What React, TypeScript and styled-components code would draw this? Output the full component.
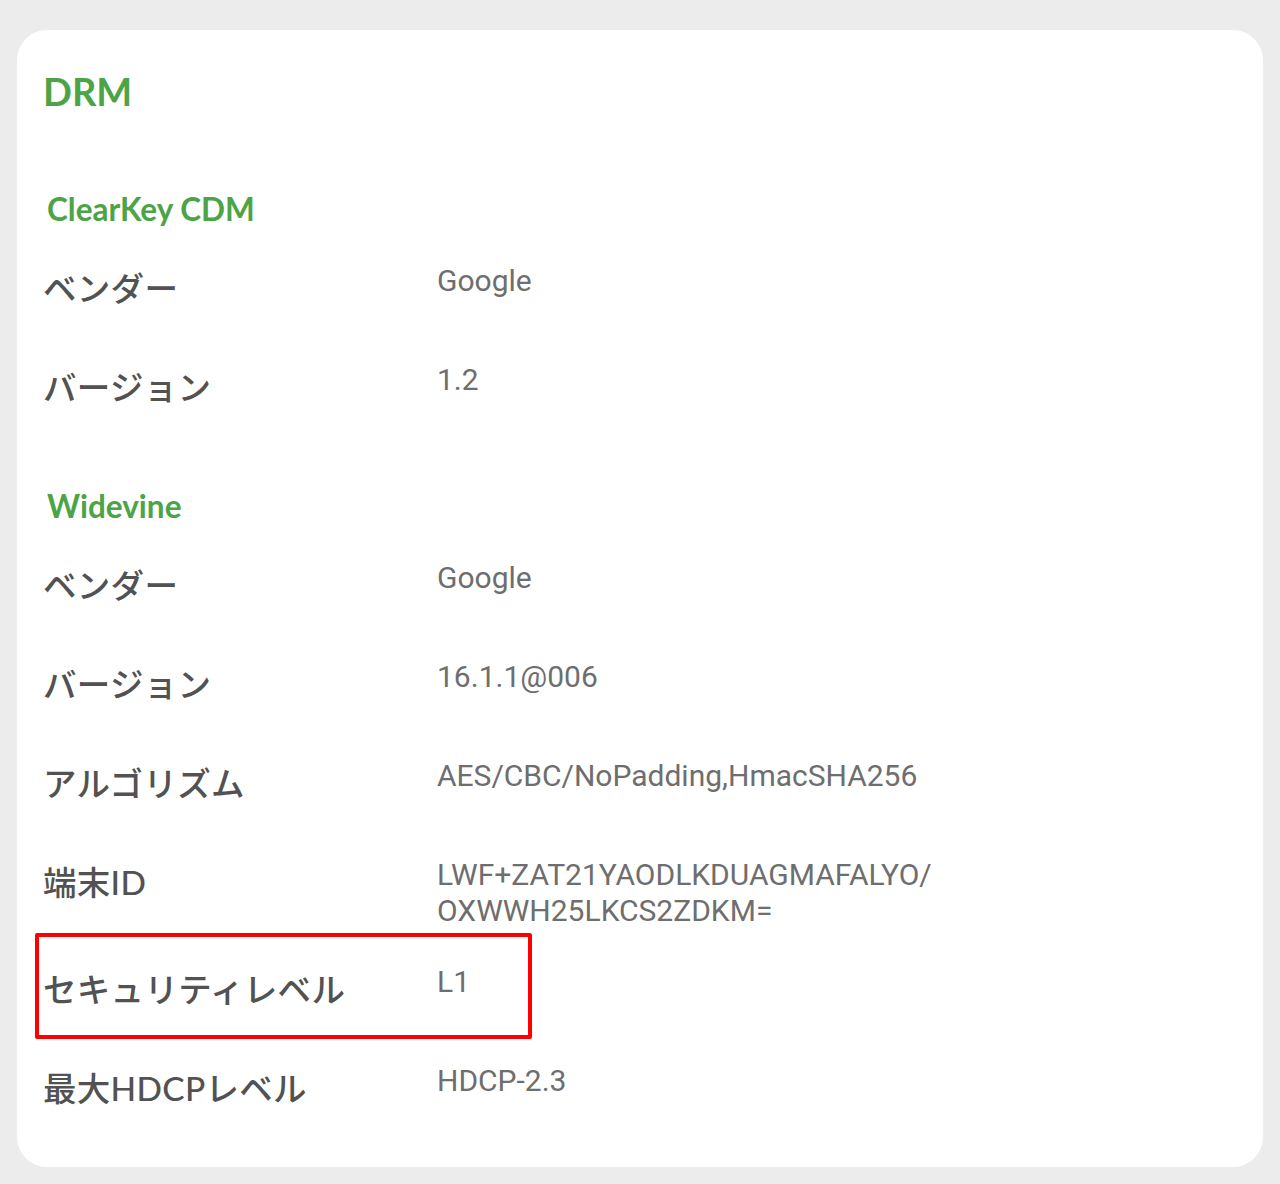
import React from "react";
import styled, { createGlobalStyle } from "styled-components";

const Global = createGlobalStyle`
  html, body { margin: 0; padding: 0; background: #ececec; }
  body { width: 1280px; height: 1184px; overflow: hidden; }
`;

const Page = styled.div`
  padding: 30px 17px 17px 17px;
  box-sizing: border-box;
  width: 1280px;
  height: 1184px;
`;

const Card = styled.div`
  background: #ffffff;
  border-radius: 30px;
  height: 1137px;
  box-sizing: border-box;
  padding: 36px 28px 0 26px;
`;

const Title = styled.h1`
  margin: 0 0 48px 0;
  font-family: Lato, "Noto Sans", sans-serif;
  font-weight: 700;
  font-size: 38px;
  line-height: 50px;
  color: #4ca446;
`;

const SectionHead = styled.h2`
  margin: 0;
  padding: 25px 0 34px 4px;
  font-family: Lato, "Noto Sans", sans-serif;
  font-weight: 700;
  font-size: 31.5px;
  line-height: 40px;
  color: #4ca446;
`;

const Row = styled.div`
  position: relative;
  display: grid;
  grid-template-columns: 394px 1fr;
  align-items: start;
  min-height: 99px;
`;

const Label = styled.div`
  font-family: Lato, "Noto Sans CJK JP", sans-serif;
  font-weight: 500;
  font-size: 33.5px;
  line-height: 50px;
  color: #525252;
  letter-spacing: 0.3px;
`;

const Value = styled.div`
  font-family: Roboto, "Noto Sans", sans-serif;
  font-weight: 400;
  font-size: 30px;
  line-height: 36px;
  color: #6e6e6e;
  padding-bottom: 35px;
`;

const Highlight = styled.div`
  position: absolute;
  left: -8px;
  top: -31px;
  width: 497px;
  height: 106px;
  box-sizing: border-box;
  border: 4px solid #ff0000;
  border-radius: 2px;
  pointer-events: none;
`;

type Item = { label: string; value: React.ReactNode; highlight?: boolean };

const clearKey: Item[] = [
  { label: "ベンダー", value: "Google" },
  { label: "バージョン", value: "1.2" },
];

const widevine: Item[] = [
  { label: "ベンダー", value: "Google" },
  { label: "バージョン", value: "16.1.1@006" },
  { label: "アルゴリズム", value: "AES/CBC/NoPadding,HmacSHA256" },
  {
    label: "端末ID",
    value: (
      <>
        LWF+ZAT21YAODLKDUAGMAFALYO/
        <br />
        OXWWH25LKCS2ZDKM=
      </>
    ),
  },
  { label: "セキュリティレベル", value: "L1", highlight: true },
  { label: "最大HDCPレベル", value: "HDCP-2.3" },
];

const Rows = ({ items }: { items: Item[] }) => (
  <>
    {items.map((it, i) => (
      <Row key={i}>
        <Label>{it.label}</Label>
        <Value>{it.value}</Value>
        {it.highlight && <Highlight />}
      </Row>
    ))}
  </>
);

export default function App() {
  return (
    <>
      <Global />
      <Page>
        <Card>
          <Title>DRM</Title>
          <SectionHead>ClearKey CDM</SectionHead>
          <Rows items={clearKey} />
          <SectionHead>Widevine</SectionHead>
          <Rows items={widevine} />
        </Card>
      </Page>
    </>
  );
}
